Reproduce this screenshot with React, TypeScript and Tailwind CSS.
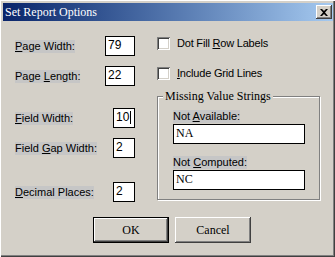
import React from 'react';

const sans = "font-['Liberation_Sans',Arial,sans-serif]";
const serif = "font-['Liberation_Serif','Times_New_Roman',serif]";

const raised = 'shadow-[inset_-1px_-1px_#404040,inset_1px_1px_#fff,inset_-2px_-2px_#808080]';
const sunken = 'shadow-[inset_1px_1px_#808080,inset_-1px_-1px_#fff,inset_2px_2px_#404040,inset_-2px_-2px_#d4d0c8]';

function Key({ children }: { children: React.ReactNode }) {
  return <span className="underline decoration-1 underline-offset-[1px]">{children}</span>;
}

const fields = [
  { pre: '', key: 'P', post: 'age Width:', value: '79', wide: true, mt: '' },
  { pre: 'Page ', key: 'L', post: 'ength:', value: '22', wide: true, mt: 'mt-[10px]' },
  { pre: '', key: 'F', post: 'ield Width:', value: '10', wide: false, mt: 'mt-[22px]', caret: true },
  { pre: 'Field ', key: 'G', post: 'ap Width:', value: '2', wide: false, mt: 'mt-[10px]' },
  { pre: '', key: 'D', post: 'ecimal Places:', value: '2', wide: false, mt: 'mt-[24px]' },
];

function Checkbox({ pre, k, post, mt }: { pre: string; k: string; post: string; mt: string }) {
  return (
    <div className={`flex h-[13px] items-center ${mt}`}>
      <div className={`h-[13px] w-[13px] bg-white ${sunken}`} />
      <span className="ml-[7px] text-[11px] leading-[13px] tracking-[-0.2px]">
        {pre}<Key>{k}</Key>{post}
      </span>
    </div>
  );
}

export default function App() {
  return (
    <div
      className={`flex h-[257px] w-[335px] flex-col bg-[#d4d0c8] pt-[3px] pl-[3px] pr-[2px] pb-[3px] text-black ${sans} shadow-[inset_1px_1px_#fff,inset_-1px_-1px_#404040,inset_-2px_-2px_#808080]`}
    >
      {/* title bar */}
      <div className="flex h-[18px] items-start bg-gradient-to-r from-[#0a246a] to-[#a6caf0]">
        <span className={`pl-[2px] text-[12px] leading-[18px] text-white ${serif}`}>Set Report Options</span>
        <div className={`ml-auto mr-[1px] mt-[2px] flex h-[14px] w-[16px] items-center justify-center bg-[#d4d0c8] ${raised}`}>
          <svg width="8" height="7" viewBox="0 0 8 7">
            <path d="M0 0h2l2 2 2-2h2L5 3.5 8 7H6L4 5 2 7H0l3-3.5z" fill="#000" />
          </svg>
        </div>
      </div>

      <div className="flex pl-[12px] pt-[15px]">
        {/* left column */}
        <div className="flex w-[120px] flex-col">
          {fields.map((f) => (
            <div key={f.key} className={`flex h-[20px] items-center justify-between ${f.mt}`}>
              <span className="bg-[#c6c6c6] text-[11px] leading-[13px]">
                {f.pre}<Key>{f.key}</Key>{f.post}
              </span>
              <div
                className={`flex h-[20px] items-start border border-black bg-white pl-[2px] text-[12px] leading-[16px] ${f.wide ? 'w-[30px]' : 'w-[22px]'}`}
              >
                {f.value}
                {f.caret && <span className="ml-[1px] mt-[2px] h-[13px] w-px bg-black" />}
              </div>
            </div>
          ))}
        </div>

        {/* right column */}
        <div className="ml-[22px] flex flex-col pt-px">
          <Checkbox pre="Dot Fill " k="R" post="ow Labels" mt="" />
          <Checkbox pre="" k="I" post="nclude Grid Lines" mt="mt-[17px]" />

          <div className="relative mt-[16px] h-[104px] w-[163px] border border-[#808080] pl-[15px] pt-[13px] shadow-[1px_1px_0_#fff,inset_1px_1px_0_#fff]">
            <span className={`absolute left-[5px] top-[-8px] bg-[#d4d0c8] px-[2px] text-[12px] leading-[14px] ${serif}`}>
              Missing Value Strings
            </span>
            <div className="flex flex-col items-start">
              <span className="bg-[#c6c6c6] text-[11px] leading-[13px]">
                Not <Key>A</Key>vailable:
              </span>
              <div className={`mt-px h-[20px] w-[132px] border border-black bg-white pl-[2px] text-[12px] leading-[17px] ${serif}`}>
                NA
              </div>
              <span className="mt-[12px] bg-[#c6c6c6] text-[11px] leading-[13px]">
                Not <Key>C</Key>omputed:
              </span>
              <div className={`mt-px h-[20px] w-[132px] border border-black bg-white pl-[2px] text-[12px] leading-[17px] ${serif}`}>
                NC
              </div>
            </div>
          </div>
        </div>
      </div>

      {/* buttons */}
      <div className={`mt-[15px] flex gap-[6px] pl-[90px] text-[12px] ${serif}`}>
        <div className="h-[26px] w-[76px] border border-black">
          <div className={`flex h-full w-full items-center justify-center ${raised}`}>OK</div>
        </div>
        <div className={`flex h-[26px] w-[76px] items-center justify-center ${raised}`}>Cancel</div>
      </div>
    </div>
  );
}
